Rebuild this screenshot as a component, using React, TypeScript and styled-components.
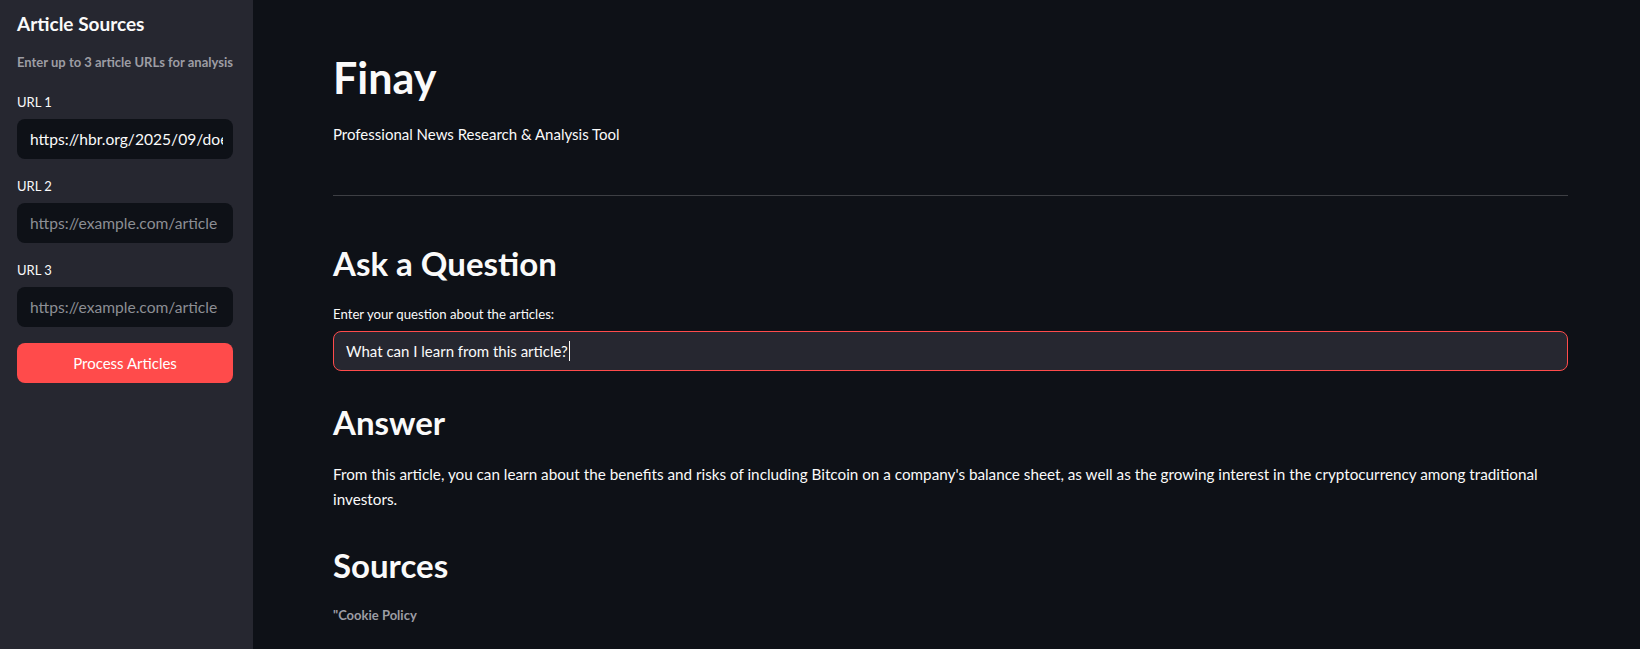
import React from 'react';
import styled, { createGlobalStyle } from 'styled-components';

const GlobalStyle = createGlobalStyle`
    html, body {
        margin: 0;
        padding: 0;
        background-color: #0e1117;
    }
    body {
        font-family: Lato, 'Noto Sans', sans-serif;
        color: #fafafa;
    }
    * {
        box-sizing: border-box;
    }
`;

const Container = styled.div`
    display: flex;
    height: 100vh;
    overflow: hidden;
`;

const Sidebar = styled.aside`
    width: 253px;
    flex-shrink: 0;
    display: flex;
    flex-direction: column;
    padding: 12px 20px 0 17px;
    background-color: #262730;
`;

const SideTitle = styled.h2`
    margin: 0;
    font-size: 19px;
    font-weight: 700;
    line-height: 24px;
`;

const SideCaption = styled.div`
    margin-top: 16px;
    font-size: 13px;
    font-weight: 700;
    line-height: 20px;
    color: #9d9da4;
`;

const Field = styled.div`
    display: flex;
    flex-direction: column;
    margin-top: ${(p: { $first?: boolean }) => (p.$first ? '20px' : '17px')};
`;

const Label = styled.label`
    font-size: 13px;
    line-height: 20px;
    margin-bottom: 7px;
    color: #fafafa;
`;

const UrlInput = styled.input`
    height: 40px;
    width: 100%;
    padding: 0 10px 0 13px;
    border: none;
    border-radius: 8px;
    outline: none;
    background-color: #0e1117;
    color: #fafafa;
    font-family: inherit;
    font-size: 15.6px;

    &::placeholder {
        color: #8c8e94;
    }
`;

const ProcessButton = styled.button`
    margin-top: 16px;
    height: 40px;
    width: 100%;
    border: none;
    border-radius: 8px;
    background-color: #ff4b4b;
    color: #ffffff;
    font-family: inherit;
    font-size: 15px;
    cursor: pointer;
`;

const Main = styled.main`
    flex: 1;
    padding: 50px 72px 0 80px;
    overflow: hidden;
`;

const Title = styled.h1`
    margin: 0;
    font-size: 43px;
    font-weight: 700;
    line-height: 56px;
`;

const Subtitle = styled.p`
    margin: 16px 0 0;
    font-size: 15px;
    line-height: 24px;
`;

const Divider = styled.hr`
    margin: 49px 0 0;
    border: none;
    border-top: 1px solid rgba(250, 250, 250, 0.2);
`;

const SectionTitle = styled.h2`
    margin: ${(p: { $top: number }) => p.$top}px 0 0;
    font-size: 33px;
    font-weight: 700;
    line-height: 44px;
`;

const QuestionLabel = styled.div`
    margin-top: 19px;
    font-size: 13.2px;
    line-height: 20px;
`;

const QuestionBox = styled.div`
    margin-top: 7px;
    height: 40px;
    display: flex;
    align-items: center;
    padding: 0 12px;
    border: 1px solid #ff4b4b;
    border-radius: 8px;
    background-color: #262730;
    font-size: 15px;
`;

const Caret = styled.span`
    display: inline-block;
    width: 1px;
    height: 20px;
    margin-left: 1px;
    background-color: #fafafa;
`;

const Paragraph = styled.p`
    margin: 18px 0 0;
    font-size: 15.25px;
    line-height: 25px;
`;

const Caption = styled.div`
    margin-top: 18px;
    font-size: 13px;
    font-weight: 700;
    line-height: 20px;
    color: #9d9da4;
`;

const App = (): JSX.Element => {
    return (
        <Container>
            <GlobalStyle />
            <Sidebar>
                <SideTitle>Article Sources</SideTitle>
                <SideCaption>Enter up to 3 article URLs for analysis</SideCaption>
                <Field $first>
                    <Label>URL 1</Label>
                    <UrlInput defaultValue="https://hbr.org/2025/09/does-bitcoin-belong-on-your-balance-sheet" />
                </Field>
                <Field>
                    <Label>URL 2</Label>
                    <UrlInput placeholder="https://example.com/article" />
                </Field>
                <Field>
                    <Label>URL 3</Label>
                    <UrlInput placeholder="https://example.com/article" />
                </Field>
                <ProcessButton>Process Articles</ProcessButton>
            </Sidebar>
            <Main>
                <Title>Finay</Title>
                <Subtitle>Professional News Research &amp; Analysis Tool</Subtitle>
                <Divider />
                <SectionTitle $top={45}>Ask a Question</SectionTitle>
                <QuestionLabel>Enter your question about the articles:</QuestionLabel>
                <QuestionBox>
                    What can I learn from this article?
                    <Caret />
                </QuestionBox>
                <SectionTitle $top={29}>Answer</SectionTitle>
                <Paragraph>
                    From this article, you can learn about the benefits and risks of including
                    Bitcoin on a company's balance sheet, as well as the growing interest in the
                    cryptocurrency among traditional investors.
                </Paragraph>
                <SectionTitle $top={31}>Sources</SectionTitle>
                <Caption>"Cookie Policy</Caption>
            </Main>
        </Container>
    );
};

export default App;
